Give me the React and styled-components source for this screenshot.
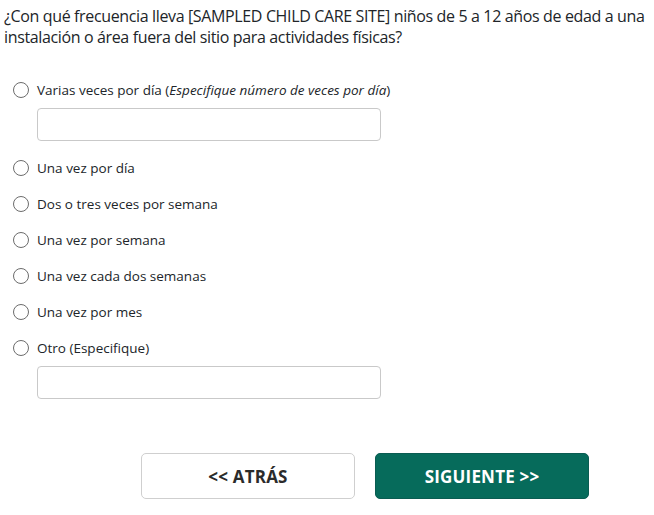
import styled, { createGlobalStyle } from "styled-components";

const Global = createGlobalStyle`
  body {
    margin: 0;
    background: #fff;
    font-family: "Open Sans", "Noto Sans", sans-serif;
    color: #212529;
  }
`;

const Page = styled.div`
  padding: 6px 4px 0 4px;
`;

const Question = styled.p`
  margin: 0 0 24px 0;
  font-size: 16px;
  letter-spacing: -0.36px;
  line-height: 21px;
`;

const Options = styled.div`
  display: flex;
  flex-direction: column;
  padding-left: 9px;
`;

const Option = styled.label`
  display: flex;
  align-items: center;
  gap: 8px;
  height: 36px;
  font-size: 13.5px;
  cursor: pointer;
`;

const Radio = styled.span`
  width: 16px;
  height: 16px;
  box-sizing: border-box;
  border: 1px solid #6c6c6c;
  border-radius: 50%;
  flex: none;
`;

const Specify = styled.input`
  box-sizing: border-box;
  width: 344px;
  height: 33px;
  margin: 0 0 9px 24px;
  border: 1px solid #c9c9c9;
  border-radius: 4px;
  background: #fff;
`;

const Actions = styled.div`
  display: flex;
  gap: 20px;
  margin-top: 45px;
  padding-left: 137px;
`;

const Button = styled.button`
  width: 214px;
  height: 46px;
  box-sizing: border-box;
  border-radius: 5px;
  font-family: "Open Sans", sans-serif;
  font-weight: 700;
  font-size: 17px;
  letter-spacing: 0.2px;
  border: 1px solid ${(p) => (p.$primary ? "#0a5c52" : "#cfcfcf")};
  background: ${(p) => (p.$primary ? "#066b5b" : "#fff")};
  color: ${(p) => (p.$primary ? "#fff" : "#2b2b2b")};
`;

const choices = [
  { label: <>Varias veces por día (<i>Especifique número de veces por día</i>)</>, input: true },
  { label: "Una vez por día" },
  { label: "Dos o tres veces por semana" },
  { label: "Una vez por semana" },
  { label: "Una vez cada dos semanas" },
  { label: "Una vez por mes" },
  { label: "Otro (Especifique)", input: true },
];

export default function App() {
  return (
    <Page>
      <Global />
      <Question>
        ¿Con qué frecuencia lleva [SAMPLED CHILD CARE SITE] niños de 5 a 12 años de edad a una
        instalación o área fuera del sitio para actividades físicas?
      </Question>
      <Options>
        {choices.map((c, i) => (
          <div key={i} style={{ display: "contents" }}>
            <Option>
              <Radio />
              <span>{c.label}</span>
            </Option>
            {c.input && <Specify type="text" />}
          </div>
        ))}
      </Options>
      <Actions>
        <Button>&lt;&lt; ATRÁS</Button>
        <Button $primary>SIGUIENTE &gt;&gt;</Button>
      </Actions>
    </Page>
  );
}
